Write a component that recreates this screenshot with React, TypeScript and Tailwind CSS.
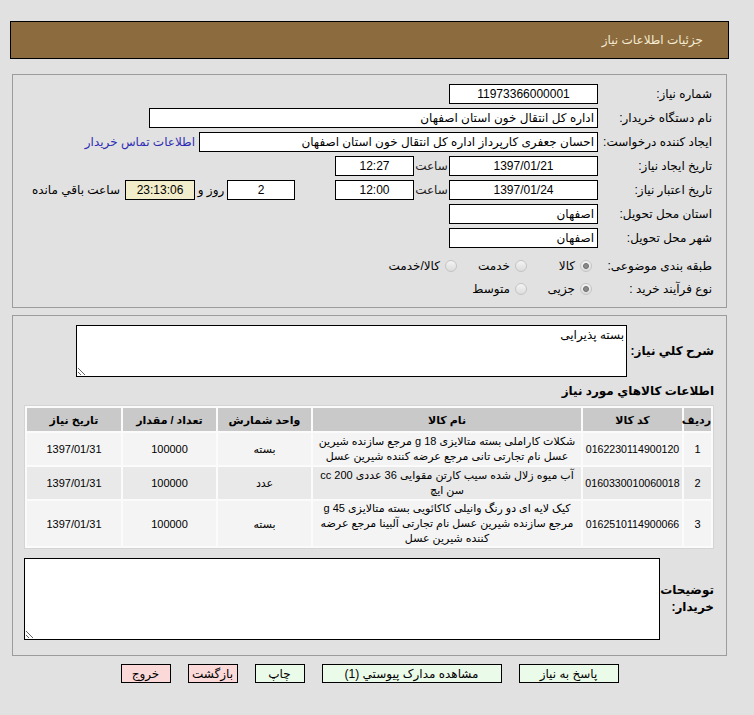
import React from "react";

const Box = ({ w, children, align = "center", bg = "bg-white" }: { w: string; children?: React.ReactNode; align?: "center" | "right"; bg?: string }) => (
  <div className={`${w} ${bg} h-[20px] shrink-0 border border-black flex items-center px-[3px] ${align === "center" ? "justify-center" : "justify-start"} whitespace-nowrap overflow-hidden`}>
    {children}
  </div>
);

const Radio = ({ checked }: { checked?: boolean }) => (
  <span className="w-[12px] h-[12px] shrink-0 rounded-full border border-[#c4c4c4] bg-gradient-to-b from-[#f4f4f4] to-[#dcdcdc] flex items-center justify-center">
    {checked ? <span className="w-[6px] h-[6px] rounded-full bg-[#8a8a8a] border border-[#6e6e6e]" /> : null}
  </span>
);

const Row = ({ label, children, h = "h-[20px]" }: { label: string; children?: React.ReactNode; h?: string }) => (
  <div className={`flex items-center ${h}`}>
    <div className="w-[114px] shrink-0 whitespace-nowrap">{label}</div>
    <div className="flex items-center">{children}</div>
  </div>
);

const items = [
  {
    n: "1",
    code: "0162230114900120",
    name: "شکلات کاراملی بسته متالایزی 18 g مرجع سازنده شیرین عسل نام تجارتی تانی مرجع عرضه کننده شیرین عسل",
    unit: "بسته",
    h: "h-[32px]",
    bg: "bg-[#f4f4f4]",
  },
  {
    n: "2",
    code: "0160330010060018",
    name: "آب میوه زلال شده سیب کارتن مقوایی 36 عددی 200 cc سن ایچ",
    unit: "عدد",
    h: "h-[32px]",
    bg: "bg-[#e9e9e9]",
  },
  {
    n: "3",
    code: "0162510114900066",
    name: "کیک لایه ای دو رنگ وانیلی کاکائویی بسته متالایزی 45 g مرجع سازنده شیرین عسل نام تجارتی آلبینا مرجع عرضه کننده شیرین عسل",
    unit: "بسته",
    h: "h-[45px]",
    bg: "bg-[#f4f4f4]",
  },
];

export default function App() {
  return (
    <div dir="rtl" className="w-[754px] min-h-[715px] bg-[#e1e1e1] text-black text-[12px] leading-[16px] font-['Liberation_Sans','DejaVu_Sans',sans-serif] pt-[21px]">
      {/* header */}
      <div className="mr-[25px] w-[719px] h-[38px] border border-black bg-[#8c6b3f] flex items-center pr-[25px] text-[#f4ecd2]">
        جزئیات اطلاعات نیاز
      </div>

      {/* panel 1 */}
      <div className="mr-[27px] w-[715px] mt-[15px] border border-[#9c9c9c] pt-[9px] pr-[14px] pb-[7px] flex flex-col">
        <div className="flex flex-col gap-[4px]">
          <Row label="شماره نیاز:">
            <Box w="w-[149px]">11973366000001</Box>
          </Row>
          <Row label="نام دستگاه خریدار:">
            <Box w="w-[449px]" align="right">اداره کل انتقال خون استان اصفهان</Box>
          </Row>
          <Row label="ایجاد کننده درخواست:">
            <Box w="w-[399px]" align="right">احسان جعفری کارپرداز اداره کل انتقال خون استان اصفهان</Box>
            <span className="mr-[4px] text-[#2d2db4] whitespace-nowrap">اطلاعات تماس خریدار</span>
          </Row>
          <Row label="تاریخ ایجاد نیاز:">
            <Box w="w-[149px]">1397/01/21</Box>
            <span className="w-[35px] text-center text-[#222]">ساعت</span>
            <Box w="w-[79px]">12:27</Box>
          </Row>
          <Row label="تاریخ اعتبار نیاز:">
            <Box w="w-[149px]">1397/01/24</Box>
            <span className="w-[35px] text-center text-[#222]">ساعت</span>
            <Box w="w-[79px]">12:00</Box>
            <span className="w-[40px]" />
            <Box w="w-[68px]">2</Box>
            <span className="w-[32px] text-center whitespace-nowrap">روز و</span>
            <Box w="w-[70px]" bg="bg-[#f1edca] border-[#8a8a8a]">23:13:06</Box>
            <span className="mr-[5px] whitespace-nowrap">ساعت باقي مانده</span>
          </Row>
          <Row label="استان محل تحویل:">
            <Box w="w-[149px]" align="right">اصفهان</Box>
          </Row>
          <Row label="شهر محل تحویل:">
            <Box w="w-[149px]" align="right">اصفهان</Box>
          </Row>
        </div>
        <div className="mt-[6px]">
          <Row label="طبقه بندی موضوعی:" h="h-[23px]">
            <div className="flex items-center mr-[6px]">
              <div className="w-[65px] flex items-center gap-[5px]"><Radio checked /><span>کالا</span></div>
              <div className="w-[70px] flex items-center gap-[5px]"><Radio /><span>خدمت</span></div>
              <div className="flex items-center gap-[5px]"><Radio /><span>کالا/خدمت</span></div>
            </div>
          </Row>
          <Row label="نوع فرآیند خرید :" h="h-[23px]">
            <div className="flex items-center mr-[6px]">
              <div className="w-[65px] flex items-center gap-[5px]"><Radio checked /><span>جزیی</span></div>
              <div className="w-[70px] flex items-center gap-[5px]"><Radio /><span>متوسط</span></div>
            </div>
          </Row>
        </div>
      </div>

      {/* panel 2 */}
      <div className="mr-[27px] w-[715px] mt-[7px] border border-[#9c9c9c] pt-[9px] pr-[12px] pl-[11px] pb-[15px] flex flex-col">
        <div className="flex items-center">
          <div className="w-[87px] shrink-0 font-bold text-[12px] whitespace-nowrap">شرح کلي نياز:</div>
          <textarea
            readOnly
            defaultValue="بسته پذیرایی"
            className="w-[551px] h-[52px] border border-black bg-white px-[2px] py-[1px] text-[12px] leading-[16px] outline-none resize"
          />
        </div>
        <div className="h-[28px] flex items-center font-bold text-[12px]">اطلاعات کالاهاي مورد نياز</div>
        <table className="w-[690px] table-fixed border-separate border-spacing-[2px] bg-[#fbfbfb] border border-[#d4d4d4] text-[11px]">
          <colgroup>
            <col className="w-[27px]" />
            <col className="w-[99px]" />
            <col className="w-[268px]" />
            <col className="w-[93px]" />
            <col className="w-[93px]" />
            <col className="w-[94px]" />
          </colgroup>
          <thead>
            <tr className="h-[23px] bg-[#c9c9c9] text-[11px]">
              <th className="font-bold px-0 text-center">ردیف</th>
              <th className="font-bold text-center">کد کالا</th>
              <th className="font-bold text-center">نام کالا</th>
              <th className="font-bold text-center">واحد شمارش</th>
              <th className="font-bold text-center">تعداد / مقدار</th>
              <th className="font-bold text-center">تاریخ نیاز</th>
            </tr>
          </thead>
          <tbody>
            {items.map((it) => (
              <tr key={it.n} className={`${it.h} ${it.bg}`}>
                <td className="text-center">{it.n}</td>
                <td className="text-center text-[10.6px] whitespace-nowrap">{it.code}</td>
                <td className="text-center leading-[15px] px-0">{it.name}</td>
                <td className="text-center">{it.unit}</td>
                <td className="text-center">100000</td>
                <td className="text-center">1397/01/31</td>
              </tr>
            ))}
          </tbody>
        </table>
        <div className="flex items-center mt-[9px]">
          <div className="w-[54px] shrink-0 font-bold text-[12px] leading-[17px]">
            توضیحات
            <br />
            خریدار:
          </div>
          <textarea
            readOnly
            className="w-[636px] h-[82px] border border-black bg-white outline-none resize"
          />
        </div>
      </div>

      {/* buttons */}
      <div className="mr-[27px] w-[715px] mt-[8px] flex justify-center gap-[17px] text-[12px]">
        <div className="w-[100px] h-[19px] border border-black bg-[#ebfbe9] flex items-center justify-center">پاسخ به نیاز</div>
        <div className="w-[180px] h-[19px] border border-black bg-[#ebfbe9] flex items-center justify-center">مشاهده مدارک پیوستي (1)</div>
        <div className="w-[50px] h-[19px] border border-black bg-[#ebfbe9] flex items-center justify-center">چاپ</div>
        <div className="w-[50px] h-[19px] border border-black bg-[#fcd9d9] flex items-center justify-center">بازگشت</div>
        <div className="w-[50px] h-[19px] border border-black bg-[#fcd9d9] flex items-center justify-center">خروج</div>
      </div>
    </div>
  );
}
